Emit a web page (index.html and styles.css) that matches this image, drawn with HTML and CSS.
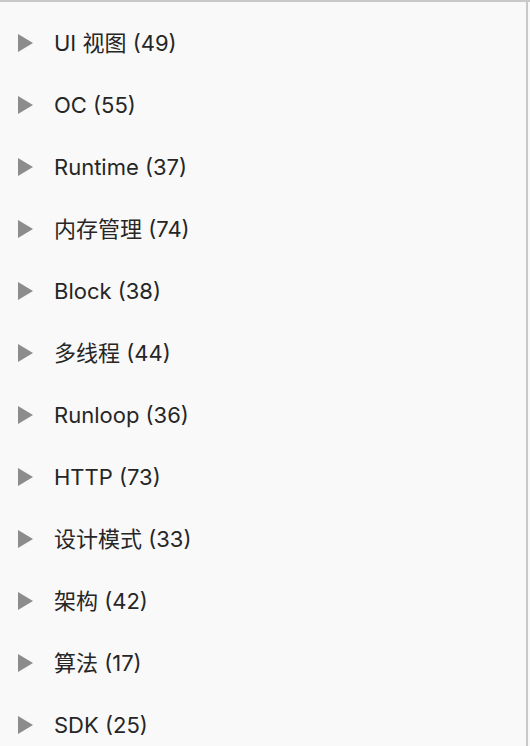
FILE: index.html
```html
<!DOCTYPE html>
<html lang="zh-CN">
<head>
<meta charset="utf-8">
<meta name="viewport" content="width=device-width, initial-scale=1">
<title>目录</title>
<link rel="stylesheet" href="styles.css">
</head>
<body>
<nav class="outline">
<details class="group"><summary class="row"><svg class="arrow" viewBox="0 0 15 18" aria-hidden="true"><path d="M0 0L15 9L0 18Z"/></svg><span>UI 视图 (49)</span></summary></details>
<details class="group"><summary class="row"><svg class="arrow" viewBox="0 0 15 18" aria-hidden="true"><path d="M0 0L15 9L0 18Z"/></svg><span>OC (55)</span></summary></details>
<details class="group"><summary class="row"><svg class="arrow" viewBox="0 0 15 18" aria-hidden="true"><path d="M0 0L15 9L0 18Z"/></svg><span>Runtime (37)</span></summary></details>
<details class="group"><summary class="row"><svg class="arrow" viewBox="0 0 15 18" aria-hidden="true"><path d="M0 0L15 9L0 18Z"/></svg><span>内存管理 (74)</span></summary></details>
<details class="group"><summary class="row"><svg class="arrow" viewBox="0 0 15 18" aria-hidden="true"><path d="M0 0L15 9L0 18Z"/></svg><span>Block (38)</span></summary></details>
<details class="group"><summary class="row"><svg class="arrow" viewBox="0 0 15 18" aria-hidden="true"><path d="M0 0L15 9L0 18Z"/></svg><span>多线程 (44)</span></summary></details>
<details class="group"><summary class="row"><svg class="arrow" viewBox="0 0 15 18" aria-hidden="true"><path d="M0 0L15 9L0 18Z"/></svg><span>Runloop (36)</span></summary></details>
<details class="group"><summary class="row"><svg class="arrow" viewBox="0 0 15 18" aria-hidden="true"><path d="M0 0L15 9L0 18Z"/></svg><span>HTTP (73)</span></summary></details>
<details class="group"><summary class="row"><svg class="arrow" viewBox="0 0 15 18" aria-hidden="true"><path d="M0 0L15 9L0 18Z"/></svg><span>设计模式 (33)</span></summary></details>
<details class="group"><summary class="row"><svg class="arrow" viewBox="0 0 15 18" aria-hidden="true"><path d="M0 0L15 9L0 18Z"/></svg><span>架构 (42)</span></summary></details>
<details class="group"><summary class="row"><svg class="arrow" viewBox="0 0 15 18" aria-hidden="true"><path d="M0 0L15 9L0 18Z"/></svg><span>算法 (17)</span></summary></details>
<details class="group"><summary class="row"><svg class="arrow" viewBox="0 0 15 18" aria-hidden="true"><path d="M0 0L15 9L0 18Z"/></svg><span>SDK (25)</span></summary></details>
</nav>
</body>
</html>
```

FILE: styles.css
```css
* {
  box-sizing: border-box;
}

body {
  margin: 0;
  background: #f9f9f9;
  color: #262626;
  font: 22px/32px Inter, "Noto Sans CJK SC", sans-serif;
  border-top: 2px solid #c9c9c9;
}

.outline {
  min-height: calc(100vh - 2px);
  margin-right: 2px;
  padding-top: 10px;
  border-right: 2px solid #c9c9c9;
}

.row {
  display: flex;
  align-items: center;
  gap: 21px;
  min-height: 62px;
  padding: 0 18px;
  list-style: none;
  cursor: default;
}

.row::-webkit-details-marker {
  display: none;
}

.arrow {
  flex: none;
  width: 15px;
  height: 18px;
  fill: #8c8c8c;
}
```
